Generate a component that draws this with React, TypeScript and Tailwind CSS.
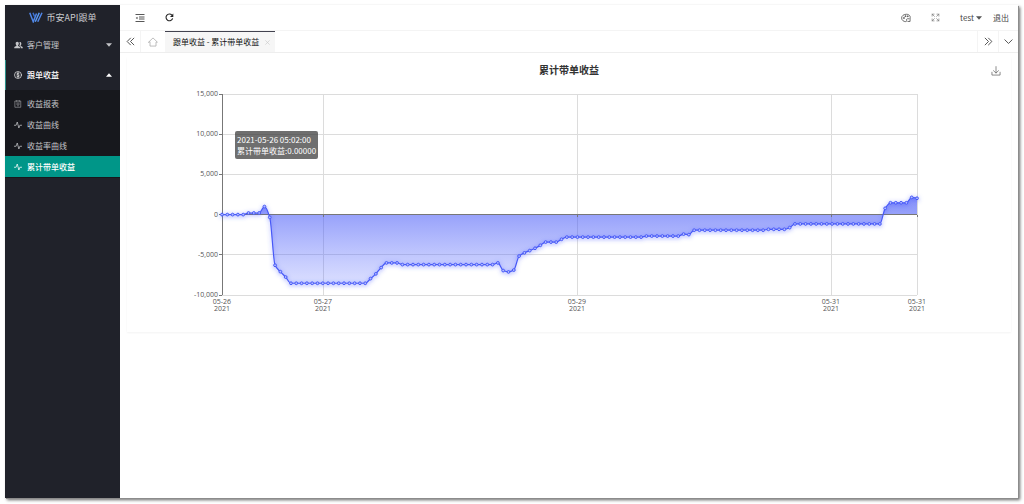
import type { ReactNode } from "react";

/* ---------- icons ---------- */

type IconProps = { className?: string };

function StrokeIcon({ className, children, width = 1 }: IconProps & { children: ReactNode; width?: number }) {
  return (
    <svg
      viewBox="0 0 16 16"
      fill="none"
      stroke="currentColor"
      strokeWidth={width}
      strokeLinecap="round"
      strokeLinejoin="round"
      aria-hidden="true"
      className={className}
    >
      {children}
    </svg>
  );
}

function LogoMark() {
  return (
    <svg viewBox="0 0 28 22" aria-hidden="true" className="h-[11px] w-[14px] shrink-0">
      <g fill="none" strokeWidth="3">
        <path d="M1.5 1.5 8.500 19.500 15 3" stroke="#4f86e8" />
        <path d="M8 1.500 11 9" stroke="#3b6fd0" />
        <path d="M12.500 19.500 20.500 1.500" stroke="#5b9bf5" />
        <path d="M17.500 19.500 26 1.500" stroke="#4f86e8" />
      </g>
    </svg>
  );
}

function UsersIcon({ className }: IconProps) {
  return (
    <svg viewBox="0 0 18 16" fill="currentColor" aria-hidden="true" className={className}>
      <path d="M6.500 1.500c2 0 3.200 1.500 3.200 3.600 0 1.500-.6 2.900-1.500 3.600v1.200c1.500.7 4 1.400 4 3.300V14.500H.5v-1.300c0-1.900 2.700-2.600 4.200-3.300V8.700C3.900 8 3.300 6.600 3.300 5.100c0-2.100 1.200-3.600 3.200-3.600z" />
      <path d="M11.700 2c1.900 0 3 1.400 3 3.300 0 1.400-.5 2.600-1.300 3.300v1.200c1.400.6 4.100 1.300 4.100 3.100v1.600h-4v-1.400c0-1.800-1.500-2.900-3-3.700.7-1 1.200-2.400 1.200-4 0-1.200-.3-2.200-.9-3 .3-.2.600-.4.900-.4z" />
    </svg>
  );
}

function DollarIcon({ className }: IconProps) {
  return (
    <StrokeIcon className={className} width={1.3}>
      <circle cx="8" cy="8" r="7" />
      <path d="M10.500 5.700C10 4.700 9 4.500 8 4.500c-1.400 0-2.400.6-2.400 1.700C5.600 8.800 10.600 7.200 10.600 9.800c0 1.100-1.100 1.800-2.600 1.800-1.300 0-2.300-.5-2.700-1.500M8 3v10" />
    </StrokeIcon>
  );
}

function ReportIcon({ className }: IconProps) {
  return (
    <StrokeIcon className={className} width={1}>
      <path d="M2.500 2h11v12.500h-11zM5.500 1v2M10.500 1v2M5.500 6h5M5.500 8.500h5M7 11.500h2" />
    </StrokeIcon>
  );
}

function PulseIcon({ className }: IconProps) {
  return (
    <StrokeIcon className={className} width={1.5}>
      <path d="M.8 8.500h3.400L6.500 2l3.200 12 2-5.500h3.500" />
    </StrokeIcon>
  );
}

function FoldIcon({ className }: IconProps) {
  return (
    <svg viewBox="0 0 20 16" aria-hidden="true" className={className}>
      <path d="M1 1h18M8 6h11M8 10h11M1 15h18" stroke="currentColor" strokeWidth="1.800" />
      <path d="M5 5.500v5L1.500 8z" fill="currentColor" />
    </svg>
  );
}

function RefreshIcon({ className }: IconProps) {
  return (
    <svg viewBox="0 0 16 16" aria-hidden="true" className={className}>
      <path d="M13.600 9.500A6 6 0 1 1 12.300 3.800" fill="none" stroke="currentColor" strokeWidth="1.900" />
      <path d="M14.800 1v6H8.800z" fill="currentColor" />
    </svg>
  );
}

function PaletteIcon({ className }: IconProps) {
  return (
    <StrokeIcon className={className} width={1.2}>
      <path d="M14.500 8.500C16 4.500 12.500 2 8.500 2 4.200 2 1 4.700 1 8s3 5.800 6.500 5.800c1.700 0 1.600-1.500 1.300-2.500-.3-1.300.6-2.100 2-2.100h1.500M11 13.500h3.500V9.200" />
      <circle cx="4.500" cy="8" r=".7" />
      <circle cx="6.800" cy="5" r=".7" />
      <circle cx="10.500" cy="5.200" r=".7" />
    </StrokeIcon>
  );
}

function FullscreenIcon({ className }: IconProps) {
  return (
    <StrokeIcon className={className} width={1.2}>
      <path d="M2 5.500V2h3.500M2 2l4 4M10.500 2H14v3.500M14 2l-4 4M2 10.500V14h3.500M2 14l4-4M10.500 14H14v-3.500M14 14l-4-4" />
    </StrokeIcon>
  );
}

function HomeIcon({ className }: IconProps) {
  return (
    <StrokeIcon className={className} width={1.2}>
      <path d="M1 8.200 8 1.500l7 6.700h-2.200V14.500H3.200V8.200z" />
    </StrokeIcon>
  );
}

function DoubleChevron({ className }: IconProps) {
  return (
    <StrokeIcon className={className} width={1.6}>
      <path d="M2 2l6 6-6 6M8 2l6 6-6 6" />
    </StrokeIcon>
  );
}

function ChevronDown({ className }: IconProps) {
  return (
    <StrokeIcon className={className} width={1.6}>
      <path d="M1.500 5 8 11.500 14.500 5" />
    </StrokeIcon>
  );
}

function DownloadIcon({ className }: IconProps) {
  return (
    <StrokeIcon className={className} width={1.2}>
      <path d="M1.500 10v4.500h13V10M8 1v10M4 7.500l4 3.800 4-3.800" />
    </StrokeIcon>
  );
}

function Caret({ up = false, className }: IconProps & { up?: boolean }) {
  return (
    <svg viewBox="0 0 12 7" fill="currentColor" aria-hidden="true" className={className}>
      <path d={up ? "M0 7 6 0l6 7z" : "M0 0h12L6 7z"} />
    </svg>
  );
}

/* ---------- sidebar ---------- */

const reportLinks = [
  { label: "收益报表", icon: ReportIcon },
  { label: "收益曲线", icon: PulseIcon },
  { label: "收益率曲线", icon: PulseIcon },
  { label: "累计带单收益", icon: PulseIcon, active: true },
];

function Sidebar() {
  return (
    <aside className="flex w-[115px] shrink-0 flex-col bg-[#20222a] text-[#c4c5c8]">
      <a href="#home" className="flex h-[25px] items-center justify-center gap-1 text-[9px] text-[#c9cacd]">
        <LogoMark />
        币安API跟单
      </a>
      <nav>
        <button type="button" className="flex h-[30px] w-full items-center gap-1 pr-2 pl-[9px]">
          <UsersIcon className="h-2 w-[9px]" />
          客户管理
          <Caret className="ml-auto h-1 w-[6px]" />
        </button>
        <button
          type="button"
          aria-expanded="true"
          className="flex h-[30px] w-full items-center gap-[5px] border-l border-[#2a8f88] pr-2 pl-2 font-medium text-white"
        >
          <DollarIcon className="size-2" />
          跟单收益
          <Caret up className="ml-auto h-1 w-[6px]" />
        </button>
        <ul className="bg-[#17181d] pt-[3px] pb-px">
          {reportLinks.map(({ label, icon: Icon, active }) => (
            <li key={label}>
              <a
                href="#report"
                aria-current={active ? "page" : undefined}
                className={
                  active
                    ? "flex h-[21px] items-center gap-[5px] bg-[#009688] pl-[9px] font-medium text-white"
                    : "flex h-[21px] items-center gap-[5px] pl-[9px]"
                }
              >
                <Icon className="size-2" />
                {label}
              </a>
            </li>
          ))}
        </ul>
      </nav>
    </aside>
  );
}

/* ---------- top bars ---------- */

function Header() {
  return (
    <header className="flex h-[26px] items-center border-b border-[#f4f4f4] pr-[9px] pl-[15px] text-[#444]">
      <button type="button" aria-label="收起菜单">
        <FoldIcon className="h-2 w-[10px]" />
      </button>
      <button type="button" aria-label="刷新" className="ml-5 text-[#222]">
        <RefreshIcon className="size-[9px]" />
      </button>
      <div className="ml-auto flex items-center gap-5">
        <button type="button" aria-label="主题">
          <PaletteIcon className="size-[10px]" />
        </button>
        <button type="button" aria-label="全屏" className="text-[#777]">
          <FullscreenIcon className="size-[9px]" />
        </button>
        <div className="flex items-center gap-[11px]">
          <button type="button" className="flex items-center gap-[2px]">
            test
            <Caret className="h-1 w-[6px] text-[#555]" />
          </button>
          <a href="#logout">退出</a>
        </div>
      </div>
    </header>
  );
}

function TabBar() {
  return (
    <div className="flex h-[22px] items-stretch border-b border-[#eee] text-[#444]">
      <button type="button" aria-label="向左" className="flex w-[21px] items-center justify-center border-r border-[#f4f4f4]">
        <DoubleChevron className="size-[9px] rotate-180" />
      </button>
      <button type="button" aria-label="首页" className="flex w-6 items-center justify-center text-[#aaa]">
        <HomeIcon className="size-[10px]" />
      </button>
      <div className="flex items-center gap-[6px] border-t border-[#42424f] bg-[#f6f6f6] pr-[5px] pl-2 text-[#111]">
        <a href="#report">跟单收益 - 累计带单收益</a>
        <button type="button" aria-label="关闭" className="text-[#c8c8c8]">
          <StrokeIcon className="size-[5px]" width={2}>
            <path d="M2 2l12 12M14 2 2 14" />
          </StrokeIcon>
        </button>
      </div>
      <button
        type="button"
        aria-label="向右"
        className="ml-auto flex w-[21px] items-center justify-center border-l border-[#f4f4f4]"
      >
        <DoubleChevron className="size-[9px]" />
      </button>
      <button type="button" aria-label="更多" className="flex w-5 items-center justify-center border-l border-[#f4f4f4]">
        <ChevronDown className="size-[9px]" />
      </button>
    </div>
  );
}

/* ---------- chart ---------- */

const runs: [value: number, count: number][] = [
  [0, 5], [200, 3], [1000, 1], [-340, 1], [-6300, 1], [-7100, 1], [-7770, 1], [-8540, 15],
  [-7960, 1], [-7370, 1], [-6590, 1], [-6010, 3], [-6220, 18], [-6010, 1], [-6960, 1],
  [-7130, 1], [-6900, 1], [-5160, 1], [-4760, 1], [-4480, 1], [-4190, 1], [-3820, 1],
  [-3420, 3], [-3070, 1], [-2800, 15], [-2670, 7], [-2430, 1], [-2490, 1], [-1940, 14],
  [-1830, 4], [-1620, 1], [-1160, 17], [780, 1], [1470, 4], [2140, 1], [2030, 1],
];
const values = runs.flatMap(([value, count]) => Array<number>(count).fill(value));

const plot = { left: 95, right: 790, top: 10, bottom: 211 };
const yOf = (v: number) => plot.top + ((15000 - v) / 25000) * (plot.bottom - plot.top);
const points = values.map((v, i) => ({
  x: plot.left + (i * (plot.right - plot.left)) / (values.length - 1),
  y: yOf(v),
}));

function smoothPath(pts: { x: number; y: number }[]) {
  const slopes = pts.slice(1).map((p, i) => (p.y - pts[i].y) / (p.x - pts[i].x));
  const tangents = pts.map((_, i) => {
    const a = slopes[i - 1] ?? slopes[i];
    const b = slopes[i] ?? a;
    return a * b <= 0 ? 0 : (2 * a * b) / (a + b);
  });
  return pts.slice(1).reduce((d, p, i) => {
    const q = pts[i];
    const h = (p.x - q.x) / 3;
    return `${d}C${q.x + h} ${q.y + tangents[i] * h} ${p.x - h} ${p.y - tangents[i + 1] * h} ${p.x} ${p.y}`;
  }, `M${pts[0].x} ${pts[0].y}`);
}

const linePath = smoothPath(points);
const zero = yOf(0);
const yTicks = [15000, 10000, 5000, 0, -5000, -10000];
const xTicks = [
  { x: 95, day: "05-26" },
  { x: 196, day: "05-27" },
  { x: 450, day: "05-29" },
  { x: 704, day: "05-31" },
  { x: 790, day: "05-31" },
];

function ProfitChart() {
  return (
    <svg viewBox="0 0 884 248" role="img" aria-label="累计带单收益" className="block w-full">
      <defs>
        <linearGradient id="area" gradientUnits="userSpaceOnUse" x1="0" y1="114" x2="0" y2="200">
          <stop offset="0" stopColor="#3a4df5" stopOpacity="0.62" />
          <stop offset="1" stopColor="#5a6cff" stopOpacity="0.22" />
        </linearGradient>
        <filter id="glow" filterUnits="userSpaceOnUse" x="80" y="90" width="730" height="130">
          <feDropShadow dx="0" dy="1" stdDeviation="2" floodColor="#4455ff" floodOpacity="0.6" />
        </filter>
      </defs>
      <g stroke="#dcdcdc" shapeRendering="crispEdges">
        {yTicks.map((t) => (
          <line key={t} x1={plot.left} x2={plot.right} y1={yOf(t)} y2={yOf(t)} />
        ))}
        {xTicks.map(({ x }) => (
          <line key={x} x1={x} x2={x} y1={plot.top} y2={plot.bottom} />
        ))}
      </g>
      <path d={`${linePath}L${plot.right} ${zero}L${plot.left} ${zero}Z`} fill="url(#area)" />
      <g stroke="#777" shapeRendering="crispEdges">
        <line x1={plot.left} x2={plot.left} y1={plot.top} y2={plot.bottom} />
        <line x1={plot.left} x2={plot.right} y1={zero} y2={zero} />
        {yTicks.map((t) => (
          <line key={t} x1={plot.left - 3} x2={plot.left} y1={yOf(t)} y2={yOf(t)} />
        ))}
        {xTicks.map(({ x }) => (
          <line key={x} x1={x} x2={x} y1={zero} y2={zero + 2} />
        ))}
      </g>
      <g filter="url(#glow)" stroke="#4759f7">
        <path d={linePath} fill="none" strokeWidth="1.2" />
        {points.map((p) => (
          <circle key={p.x} cx={p.x} cy={p.y} r="1.4" fill="#b4bdff" strokeWidth="1" />
        ))}
      </g>
      <g fill="#555" className="font-['Open_Sans',sans-serif] text-[7px]">
        {yTicks.map((t) => (
          <text key={t} x={plot.left - 4} y={yOf(t) + 2} textAnchor="end">
            {t.toLocaleString("en-US")}
          </text>
        ))}
        {xTicks.map(({ x, day }) => (
          <text key={x} textAnchor="middle">
            <tspan x={x} y="220">{day}</tspan>
            <tspan x={x} y="227">2021</tspan>
          </text>
        ))}
      </g>
    </svg>
  );
}

function ChartCard() {
  return (
    <section className="relative bg-white shadow-[0_1px_2px_rgba(0,0,0,0.05)]">
      <div className="grid h-[27px] grid-cols-[1fr_auto_1fr] items-center">
        <h1 className="col-start-2 pb-[2px] text-[10px] leading-4 font-bold text-[#333]">累计带单收益</h1>
        <button type="button" aria-label="下载图片" className="mr-[10px] justify-self-end text-[#666]">
          <DownloadIcon className="size-[10px]" />
        </button>
      </div>
      <ProfitChart />
      <div
        role="tooltip"
        className="absolute top-[74px] left-[108px] rounded-xs bg-[#323232]/70 px-[2px] py-[3px] leading-[11px] whitespace-nowrap text-white"
      >
        <div>2021-05-26 05:02:00</div>
        <div>累计带单收益:0.00000</div>
      </div>
    </section>
  );
}

export default function App() {
  return (
    <div className="flex h-screen min-h-[300px] bg-white pt-[5px] pr-[6px] pb-[6px] pl-[5px] font-['Noto_Sans_CJK_SC',sans-serif] text-[8px] leading-3">
      <div className="flex min-w-0 flex-1 bg-white shadow-[1px_1px_0_#8c8c8c,2px_2px_3px_rgba(0,0,0,0.6)]">
        <Sidebar />
        <div className="flex min-w-0 flex-1 flex-col">
          <Header />
          <TabBar />
          <main className="flex-1 px-[7px] pt-1">
            <ChartCard />
          </main>
        </div>
      </div>
    </div>
  );
}
